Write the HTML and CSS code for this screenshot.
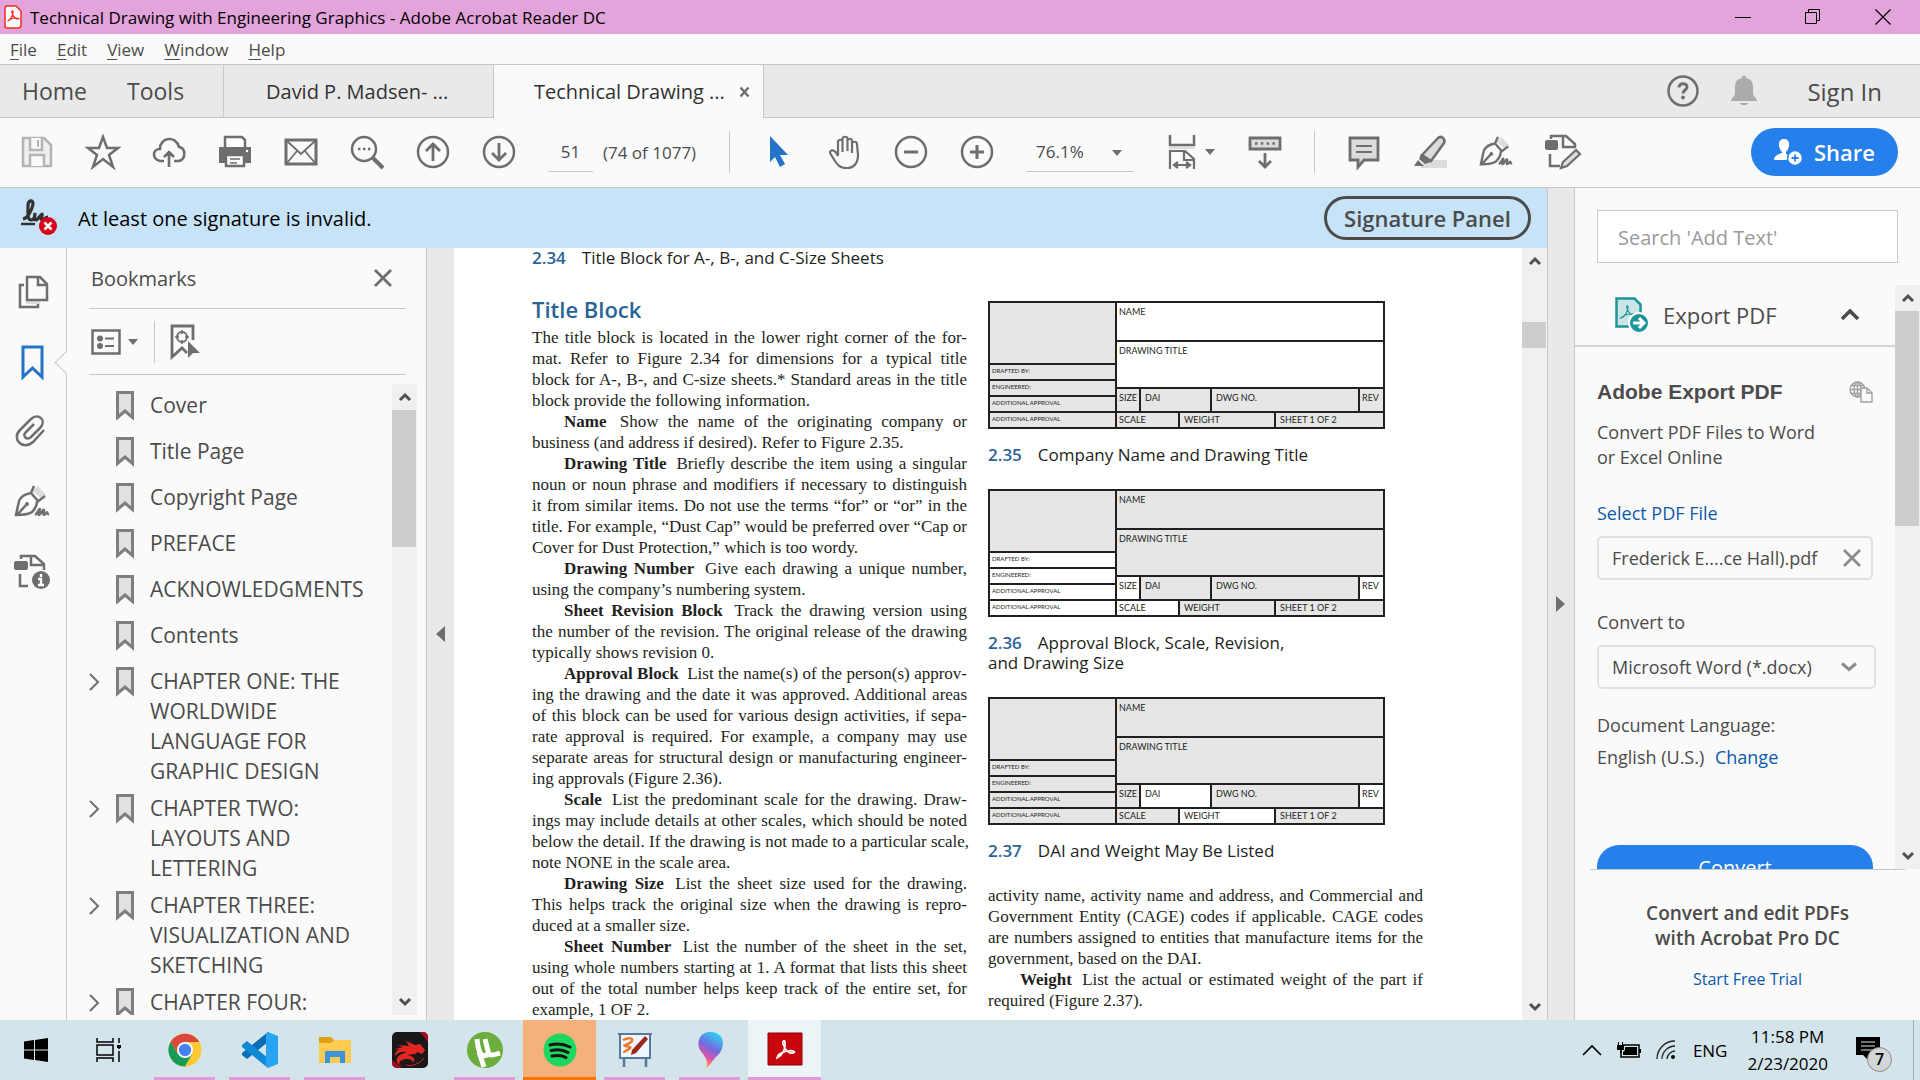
FILE: index.html
```html
<!DOCTYPE html>
<html lang="en">
    <head>
        <meta charset="UTF-8" />
        <meta name="viewport" content="width=device-width, initial-scale=1.0" />
        <title>Technical Drawing with Engineering Graphics - Adobe Acrobat Reader DC</title>
        <link rel="stylesheet" href="styles.css">
    </head>
    <body>
        <!-- shared icons -->
        <svg class="defs" aria-hidden="true">
            <symbol id="i-up" viewBox="0 0 14 10"><path d="M2 8l5-5 5 5" fill="none" stroke="#505050" stroke-width="3"/></symbol>
            <symbol id="i-down" viewBox="0 0 14 10"><path d="M2 2l5 5 5-5" fill="none" stroke="#505050" stroke-width="3"/></symbol>
            <symbol id="i-right" viewBox="0 0 12 20"><path d="M1 2l8 8-8 8" fill="none" stroke="#6e6e6e" stroke-width="2"/></symbol>
            <symbol id="i-caret" viewBox="0 0 12 8"><path d="M1 1h10L6 7z" fill="#6e6e6e"/></symbol>
            <symbol id="i-mark" viewBox="0 0 18 30"><path d="M1.500 1.500h15v25L9 20l-7.500 6.500z" fill="#e1e1e1" stroke="#7e7e7e" stroke-width="3"/></symbol>
            <symbol id="i-pen" viewBox="0 0 36 36">
                <path d="M18 7l6-5 8 9-5 3z" fill="#dcdcdc"/>
                <path d="M20 2l-3 7c-6 1-10 3-12 8L2 31c6 0 13-1 16-3 3-3 5-7 5-10l8-6M17 9l7 8M3 31l9-10" fill="none" stroke="#6e6e6e" stroke-width="2.500"/>
                <circle cx="13" cy="20" r="2" fill="#6e6e6e"/>
                <path d="M21 31c2-1 4-7 5-6s-3 6-1 6 4-7 5-5-2 5 0 5 2-3 3-3 0 3 2 2" fill="none" stroke="#6e6e6e" stroke-width="2.200"/>
            </symbol>
        </svg>

        <header class="titlebar">
            <svg class="app-icon" viewBox="0 0 18 24"><path d="M3 1h9l5 5v14a3 3 0 0 1-3 3H3a2 2 0 0 1-2-2V3a2 2 0 0 1 2-2z" fill="#fff" stroke="#f22b1f" stroke-width="1.500"/><path d="M4 16c2-1 5-5 5-9 0-2-2-1-1 1 1 4 4 6 6 6s1-1-2-1c-4 0-8 2-8 3z" fill="none" stroke="#f22b1f" stroke-width="1.200"/></svg>
            <h1>Technical Drawing with Engineering Graphics - Adobe Acrobat Reader DC</h1>
            <div class="win-btns">
                <button aria-label="Minimize"><svg viewBox="0 0 16 16"><path d="M0 8.500h16" stroke="#000"/></svg></button>
                <button aria-label="Restore"><svg viewBox="0 0 16 16"><path d="M.5 3.500h11v11H.5zM3.500 3.500v-3h11v11h-3" fill="none" stroke="#000"/></svg></button>
                <button aria-label="Close"><svg viewBox="0 0 16 16"><path d="M.5.5l15 15M15.500.5l-15 15" stroke="#000" stroke-width="1.200"/></svg></button>
            </div>
        </header>

        <nav class="menubar">
            <a href="#"><u>F</u>ile</a>
            <a href="#"><u>E</u>dit</a>
            <a href="#"><u>V</u>iew</a>
            <a href="#"><u>W</u>indow</a>
            <a href="#"><u>H</u>elp</a>
        </nav>

        <div class="tabs">
            <div class="home-tabs">
                <button>Home</button>
                <button>Tools</button>
            </div>
            <button class="tab">David P. Madsen- ...</button>
            <button class="tab active">Technical Drawing ... <svg viewBox="0 0 12 12"><path d="M1.500 1.500l8 9M9.500 1.500l-8 9" stroke="#6e6e6e" stroke-width="2.400"/></svg></button>
            <div class="account">
                <svg class="help" viewBox="0 0 32 32"><circle cx="16" cy="16" r="14.500" fill="none" stroke="#6e6e6e" stroke-width="2.500"/><path d="M12 12.500c0-5 8-5 8-.5 0 3-4 3-4 6.500" fill="none" stroke="#6e6e6e" stroke-width="3"/><circle cx="16" cy="22.500" r="1.900" fill="#6e6e6e"/></svg>
                <svg class="bell" viewBox="0 0 26 30"><path d="M11 0h4v2c5 1 7 4 7 9v7c0 2 4 4 4 7H0c0-3 4-5 4-7v-7c0-5 2-8 7-9zM9 27h8c-1 3-7 3-8 0z" fill="#ababab"/></svg>
                <a href="#">Sign In</a>
            </div>
        </div>

        <div class="toolbar">
            <div class="tools">
                <button aria-label="Save"><svg viewBox="0 0 34 34"><path d="M3 3h21l7 7v21H3z" fill="#efefef" stroke="#b4b4b4" stroke-width="2.500"/><path d="M10 3v12h12V3M10 31V20h14v11" fill="#fafafa" stroke="#b4b4b4" stroke-width="2.500"/><path d="M18 5v7" stroke="#b4b4b4" stroke-width="2"/></svg></button>
                <button aria-label="Star"><svg viewBox="0 0 34 34"><path d="M17 2l4 11h11l-9 7 4 12-10-8-10 8 4-12-9-7h11z" fill="none" stroke="#6e6e6e" stroke-width="2.500"/></svg></button>
                <button aria-label="Upload"><svg viewBox="0 0 34 34"><path d="M12 26H8c-8-2-8-12 0-12 0-12 16-14 19-2 7 1 7 12 0 14h-5M17 32V18M12 22l5-5 5 5" fill="none" stroke="#6e6e6e" stroke-width="2.600"/></svg></button>
                <button aria-label="Print"><svg viewBox="0 0 34 34"><path d="M7 12V2h17l3 3v7" fill="#fff" stroke="#6e6e6e" stroke-width="2.500"/><path d="M1 12h32v16H1z" fill="#6e6e6e"/><path d="M8 20h18v11H8z" fill="#fff" stroke="#6e6e6e" stroke-width="2.500"/><path d="M12 24h10M12 28h7" stroke="#6e6e6e" stroke-width="1.600"/><circle cx="29" cy="16" r="1.200" fill="#fff"/></svg></button>
                <button aria-label="Email"><svg viewBox="0 0 34 34"><path d="M2 5h30v24H2z" fill="none" stroke="#6e6e6e" stroke-width="3"/><path d="M3 6l14 13L31 6M3 28l10-12M31 28L21 16" fill="none" stroke="#6e6e6e" stroke-width="1.800"/></svg></button>
                <button aria-label="Find"><svg viewBox="0 0 34 34"><circle cx="14" cy="14" r="12" fill="none" stroke="#6e6e6e" stroke-width="2.500"/><path d="M22 22l11 11" stroke="#6e6e6e" stroke-width="4"/><path d="M8 14h2.400M13 14h2.400M18 14h2.400" stroke="#6e6e6e" stroke-width="2.400"/></svg></button>
                <button aria-label="Previous page"><svg viewBox="0 0 34 34"><circle cx="17" cy="17" r="15" fill="none" stroke="#6e6e6e" stroke-width="2.500"/><path d="M17 26V9M10 16l7-7 7 7" fill="none" stroke="#6e6e6e" stroke-width="2.800"/></svg></button>
                <button aria-label="Next page"><svg viewBox="0 0 34 34"><circle cx="17" cy="17" r="15" fill="none" stroke="#6e6e6e" stroke-width="2.500"/><path d="M17 8v17M10 18l7 7 7-7" fill="none" stroke="#6e6e6e" stroke-width="2.800"/></svg></button>
            </div>
            <div class="page-nav">
                <input type="text" value="51" aria-label="Page number">
                <span>(74 of 1077)</span>
            </div>
            <i class="sep"></i>
            <div class="tools">
                <button aria-label="Select"><svg viewBox="0 0 34 34"><path d="M8 1l18 19h-8l5 9-5 3-5-10-5 5z" fill="#2373c8"/></svg></button>
                <button aria-label="Hand"><svg viewBox="0 0 34 34"><path d="M10 20V7c0-3 4.500-3 4.500 0v10M14.500 15V4c0-3 5-3 5 0v12M19.500 6c0-3 4.500-3 4.500 0v12M24 9c0-3 5-3 5 0l1 11c0 8-4 13-11 13-9 0-10-4-17-15 0-4 5-4 8 3" fill="none" stroke="#6e6e6e" stroke-width="2.200"/></svg></button>
                <button aria-label="Zoom out"><svg viewBox="0 0 34 34"><circle cx="17" cy="17" r="15" fill="none" stroke="#6e6e6e" stroke-width="2.500"/><path d="M10 17h14" stroke="#6e6e6e" stroke-width="3"/></svg></button>
                <button aria-label="Zoom in"><svg viewBox="0 0 34 34"><circle cx="17" cy="17" r="15" fill="none" stroke="#6e6e6e" stroke-width="2.500"/><path d="M10 17h14M17 10v14" stroke="#6e6e6e" stroke-width="3"/></svg></button>
            </div>
            <div class="zoom">
                <select aria-label="Zoom"><option>76.1%</option></select>
                <svg class="caret"><use href="#i-caret"/></svg>
            </div>
            <button class="fit" aria-label="Fit width"><svg class="ico" viewBox="0 0 34 34"><path d="M4 0v10h24V0" fill="none" stroke="#6e6e6e" stroke-width="2.500"/><path d="M3 12h26v2H3z" fill="#dcdcdc"/><path d="M4 34V16h15l9 8v10M18 16v9h10M8 30h16M12 27l-4 3 4 3M20 27l4 3-4 3" fill="none" stroke="#6e6e6e" stroke-width="2.200"/></svg><svg class="caret"><use href="#i-caret"/></svg></button>
            <div class="tools">
                <button aria-label="Page display"><svg viewBox="0 0 34 34"><path d="M2 3h30v11H2z" fill="#dcdcdc" stroke="#6e6e6e" stroke-width="2.800"/><path d="M7 8.500h20" stroke="#6e6e6e" stroke-width="2.500" stroke-dasharray="2.500 3.300"/><path d="M17 18v14M11 26l6 6 6-6" fill="none" stroke="#6e6e6e" stroke-width="2.800"/></svg></button>
            </div>
            <i class="sep"></i>
            <div class="tools">
                <button aria-label="Comment"><svg viewBox="0 0 34 34"><path d="M3 3h28v22H17l-6 7v-7H3z" fill="#dcdcdc" stroke="#6e6e6e" stroke-width="2.800"/><path d="M9 11h16M9 17h16" stroke="#6e6e6e" stroke-width="2"/></svg></button>
                <button aria-label="Highlight"><svg viewBox="0 0 34 34"><path d="M12 25h22v8H7z" fill="#dcdcdc"/><path d="M9 20L25 3c3-3 8 1 6 5L18 26z" fill="#dcdcdc" stroke="#6e6e6e" stroke-width="2.500"/><path d="M8 19l10 8-6 2-6-5zM5 25l6 6H1z" fill="#6e6e6e"/></svg></button>
                <button aria-label="Sign"><svg viewBox="0 0 36 36"><use href="#i-pen"/></svg></button>
                <button aria-label="Edit PDF"><svg viewBox="0 0 34 34"><path d="M6 4V1h15l9 8v4M18 1v11h12M5 19v12h10" fill="none" stroke="#6e6e6e" stroke-width="2.500"/><rect x="0" y="5" width="13" height="10" rx="2" fill="#6e6e6e"/><path d="M16 33l2-6 13-12 4 4-13 12z" fill="#dcdcdc" stroke="#6e6e6e" stroke-width="2.200"/></svg></button>
            </div>
            <button class="share"><svg viewBox="0 0 28 28"><path d="M10 1c7 0 6 9 2 13v2c5 1 6 3 6 6H0c0-3 2-5 8-7v-1C4 10 3 1 10 1z" fill="#fff"/><circle cx="21" cy="20" r="7.500" fill="#fff" stroke="#2680eb" stroke-width="1.500"/><path d="M17.500 20h7M21 16.500v7" stroke="#2680eb" stroke-width="1.800"/></svg>Share</button>
        </div>

        <div class="workspace">
            <div class="viewer">
                <div class="sigbar">
                    <svg viewBox="0 0 38 38"><path d="M3 20c5-1 9-9 10-15 0-5-5-4-5 2 0 5-1 14 3 14s4-7 4-7-1 7 1 7 5-6 6-6-2 6 0 6 3-3 6-3" fill="none" stroke="#323232" stroke-width="3.200"/><path d="M1 25h14" stroke="#323232" stroke-width="2.500"/><circle cx="28" cy="27" r="9" fill="#d7001c"/><path d="M24.500 23.500l7 7M31.500 23.500l-7 7" stroke="#fff" stroke-width="2.600"/></svg>
                    <span>At least one signature is invalid.</span>
                    <button>Signature Panel</button>
                </div>
                <div class="panes">
                    <nav class="rail">
                        <button aria-label="Page thumbnails"><svg viewBox="0 0 36 36"><path d="M10 11H6v22h18v-6" fill="none" stroke="#6e6e6e" stroke-width="2.500"/><path d="M12 27h13v3H12z" fill="#dcdcdc"/><path d="M13 3h13l7 7v16H13zM24 3v8h9" fill="none" stroke="#6e6e6e" stroke-width="2.500"/></svg></button>
                        <button class="current" aria-label="Bookmarks"><svg viewBox="0 0 36 36"><path d="M9 3h19v30l-9.500-9L9 33z" fill="none" stroke="#2373c8" stroke-width="3"/></svg></button>
                        <button aria-label="Attachments"><svg viewBox="0 0 36 36"><path d="M30 16L19 28C9 37-3 25 6 16L17 5c8-7 16 2 9 9L17 23c-4 4-9-1-5-5l8-8" fill="none" stroke="#6e6e6e" stroke-width="2.500"/></svg></button>
                        <button aria-label="Signatures"><svg viewBox="0 0 36 36"><use href="#i-pen"/></svg></button>
                        <button aria-label="Document info"><svg viewBox="0 0 36 36"><path d="M7 5V2h14l9 8v6M17 2v9h13M6 20v12h8" fill="none" stroke="#6e6e6e" stroke-width="2.500"/><rect x="0" y="7" width="14" height="9" rx="2" fill="#6e6e6e"/><circle cx="27" cy="26" r="9" fill="#6e6e6e"/><path d="M27 20v3M24 25h3v6M24 31h6" fill="none" stroke="#fff" stroke-width="2.400"/></svg></button>
                    </nav>

                    <aside class="bookmarks">
                        <div class="bm-head">
                            <h2>Bookmarks</h2>
                            <button aria-label="Close panel"><svg viewBox="0 0 18 18"><path d="M1 1l16 16M17 1L1 17" stroke="#6e6e6e" stroke-width="2.800"/></svg></button>
                        </div>
                        <div class="bm-tools">
                            <button aria-label="Options"><svg class="opt" viewBox="0 0 30 26"><path d="M1.500 1.500h27v23h-27z" fill="none" stroke="#6e6e6e" stroke-width="2.500"/><circle cx="9" cy="9.500" r="3" fill="#6e6e6e"/><circle cx="9" cy="17" r="3" fill="#6e6e6e"/><path d="M14 9.500h9M14 17h9" stroke="#6e6e6e" stroke-width="2.200"/></svg><svg class="caret"><use href="#i-caret"/></svg></button>
                            <i class="sep"></i>
                            <button aria-label="Find current bookmark"><svg class="find" viewBox="0 0 30 36"><path d="M23 16V2H2v31l10-9 5 5" fill="none" stroke="#6e6e6e" stroke-width="2.800"/><circle cx="12" cy="13" r="5" fill="none" stroke="#6e6e6e" stroke-width="2"/><path d="M12 6v4M12 16v4M5 13h4M15 13h4" stroke="#6e6e6e" stroke-width="1.600"/><path d="M18 17l12 12h-7l-5 5z" fill="#6e6e6e"/></svg></button>
                        </div>
                        <div class="bm-body">
                            <ul class="bm-list">
                                <li><i></i><svg class="mark"><use href="#i-mark"/></svg><span>Cover</span></li>
                                <li><i></i><svg class="mark"><use href="#i-mark"/></svg><span>Title Page</span></li>
                                <li><i></i><svg class="mark"><use href="#i-mark"/></svg><span>Copyright Page</span></li>
                                <li><i></i><svg class="mark"><use href="#i-mark"/></svg><span>PREFACE</span></li>
                                <li><i></i><svg class="mark"><use href="#i-mark"/></svg><span>ACKNOWLEDGMENTS</span></li>
                                <li><i></i><svg class="mark"><use href="#i-mark"/></svg><span>Contents</span></li>
                                <li><svg class="exp"><use href="#i-right"/></svg><svg class="mark"><use href="#i-mark"/></svg><span>CHAPTER ONE: THE<br>WORLDWIDE<br>LANGUAGE FOR<br>GRAPHIC DESIGN</span></li>
                                <li><svg class="exp"><use href="#i-right"/></svg><svg class="mark"><use href="#i-mark"/></svg><span>CHAPTER TWO:<br>LAYOUTS AND<br>LETTERING</span></li>
                                <li><svg class="exp"><use href="#i-right"/></svg><svg class="mark"><use href="#i-mark"/></svg><span>CHAPTER THREE:<br>VISUALIZATION AND<br>SKETCHING</span></li>
                                <li><svg class="exp"><use href="#i-right"/></svg><svg class="mark"><use href="#i-mark"/></svg><span>CHAPTER FOUR:</span></li>
                            </ul>
                            <div class="scroll bm-scroll">
                                <svg><use href="#i-up"/></svg>
                                <i class="thumb"></i>
                                <svg class="end"><use href="#i-down"/></svg>
                            </div>
                        </div>
                    </aside>

                    <button class="strip strip-left" aria-label="Collapse left pane"><svg viewBox="0 0 10 16"><path d="M9 0v16L0 8z" fill="#6e6e6e"/></svg></button>

                    <main class="page">
                        <div class="col">
                            <p class="caption"><b>2.34</b>Title Block for A-, B-, and C-Size Sheets</p>
                            <h2>Title Block</h2>
                            <p><span>The title block is located in the lower right corner of the for-</span><span>mat. Refer to Figure 2.34 for dimensions for a typical title</span><span>block for A-, B-, and C-size sheets.* Standard areas in the title</span><span>block provide the following information.</span></p>
                            <p class="run"><span><b>Name</b> Show the name of the originating company or</span><span>business (and address if desired). Refer to Figure 2.35.</span></p>
                            <p class="run"><span><b>Drawing Title</b> Briefly describe the item using a singular</span><span>noun or noun phrase and modifiers if necessary to distinguish</span><span>it from similar items. Do not use the terms “for” or “or” in the</span><span>title. For example, “Dust Cap” would be preferred over “Cap or</span><span>Cover for Dust Protection,” which is too wordy.</span></p>
                            <p class="run"><span><b>Drawing Number</b> Give each drawing a unique number,</span><span>using the company’s numbering system.</span></p>
                            <p class="run"><span><b>Sheet Revision Block</b> Track the drawing version using</span><span>the number of the revision. The original release of the drawing</span><span>typically shows revision 0.</span></p>
                            <p class="run"><span><b>Approval Block</b> List the name(s) of the person(s) approv-</span><span>ing the drawing and the date it was approved. Additional areas</span><span>of this block can be used for various design activities, if sepa-</span><span>rate approval is required. For example, a company may use</span><span>separate areas for structural design or manufacturing engineer-</span><span>ing approvals (Figure 2.36).</span></p>
                            <p class="run"><span><b>Scale</b> List the predominant scale for the drawing. Draw-</span><span>ings may include details at other scales, which should be noted</span><span>below the detail. If the drawing is not made to a particular scale,</span><span>note NONE in the scale area.</span></p>
                            <p class="run"><span><b>Drawing Size</b> List the sheet size used for the drawing.</span><span>This helps track the original size when the drawing is repro-</span><span>duced at a smaller size.</span></p>
                            <p class="run"><span><b>Sheet Number</b> List the number of the sheet in the set,</span><span>using whole numbers starting at 1. A format that lists this sheet</span><span>out of the total number helps keep track of the entire set, for</span><span>example, 1 OF 2.</span></p>
                        </div>
                        <div class="col figures">
                            <figure>
                                <div class="block">
                                    <div class="left">
                                        <div class="blank"></div>
                                        <div>DRAFTED BY:</div>
                                        <div>ENGINEERED:</div>
                                        <div>ADDITIONAL APPROVAL</div>
                                        <div>ADDITIONAL APPROVAL</div>
                                    </div>
                                    <div class="right">
                                        <div class="name on">NAME</div>
                                        <div class="dtitle on">DRAWING TITLE</div>
                                        <div class="row ids"><div>SIZE</div><div>DAI</div><div>DWG NO.</div><div>REV</div></div>
                                        <div class="row foot"><div>SCALE</div><div>WEIGHT</div><div>SHEET 1 OF 2</div></div>
                                    </div>
                                </div>
                                <figcaption class="caption"><b>2.35</b>Company Name and Drawing Title</figcaption>
                            </figure>
                            <figure>
                                <div class="block">
                                    <div class="left">
                                        <div class="blank"></div>
                                        <div class="on">DRAFTED BY:</div>
                                        <div class="on">ENGINEERED:</div>
                                        <div class="on">ADDITIONAL APPROVAL</div>
                                        <div class="on">ADDITIONAL APPROVAL</div>
                                    </div>
                                    <div class="right">
                                        <div class="name">NAME</div>
                                        <div class="dtitle">DRAWING TITLE</div>
                                        <div class="row ids"><div class="on">SIZE</div><div>DAI</div><div>DWG NO.</div><div class="on">REV</div></div>
                                        <div class="row foot"><div class="on">SCALE</div><div>WEIGHT</div><div>SHEET 1 OF 2</div></div>
                                    </div>
                                </div>
                                <figcaption class="caption"><b>2.36</b>Approval Block, Scale, Revision,<br>and Drawing Size</figcaption>
                            </figure>
                            <figure>
                                <div class="block">
                                    <div class="left">
                                        <div class="blank"></div>
                                        <div>DRAFTED BY:</div>
                                        <div>ENGINEERED:</div>
                                        <div>ADDITIONAL APPROVAL</div>
                                        <div>ADDITIONAL APPROVAL</div>
                                    </div>
                                    <div class="right">
                                        <div class="name">NAME</div>
                                        <div class="dtitle">DRAWING TITLE</div>
                                        <div class="row ids"><div>SIZE</div><div class="on">DAI</div><div>DWG NO.</div><div class="on">REV</div></div>
                                        <div class="row foot"><div>SCALE</div><div class="on">WEIGHT</div><div>SHEET 1 OF 2</div></div>
                                    </div>
                                </div>
                                <figcaption class="caption"><b>2.37</b>DAI and Weight May Be Listed</figcaption>
                            </figure>
                            <p><span>activity name, activity name and address, and Commercial and</span><span>Government Entity (CAGE) codes if applicable. CAGE codes</span><span>are numbers assigned to entities that manufacture items for the</span><span>government, based on the DAI.</span></p>
                            <p class="run"><span><b>Weight</b> List the actual or estimated weight of the part if</span><span>required (Figure 2.37).</span></p>
                        </div>
                    </main>
                    <div class="scroll page-scroll">
                        <svg><use href="#i-up"/></svg>
                        <i class="thumb"></i>
                        <svg class="end"><use href="#i-down"/></svg>
                    </div>
                </div>
            </div>

            <button class="strip strip-right" aria-label="Collapse right pane"><svg viewBox="0 0 10 16"><path d="M0 0v16l9-8z" fill="#6e6e6e"/></svg></button>

            <aside class="toolpane">
                <input class="search" type="text" placeholder="Search 'Add Text'" aria-label="Search tools">
                <div class="tp-body">
                    <div class="tp-main">
                        <div class="tp-head">
                            <svg class="exp-icon" viewBox="0 0 34 36"><path d="M1.500 1.500h18l6 6v22h-24z" fill="#cbe5e7" stroke="#1c959c" stroke-width="2.500"/><path d="M6 21c4-1 7-7 7-11 0-2-2-1-1 1 1 5 5 8 8 7s-1-2-4-1c-5 0-9 3-10 4z" fill="none" stroke="#1c959c" stroke-width="1.200"/><circle cx="24" cy="26" r="10" fill="#1c959c" stroke="#fafafa" stroke-width="2"/><path d="M18 26h10M24 21l5 5-5 5" fill="none" stroke="#fff" stroke-width="3"/></svg>
                            <h3>Export PDF</h3>
                            <svg class="chev" viewBox="0 0 18 12"><path d="M1 10l8-8 8 8" fill="none" stroke="#4b4b4b" stroke-width="3.500"/></svg>
                        </div>
                        <div class="tp-form">
                            <div class="tp-title">
                                <h4>Adobe Export PDF</h4>
                                <svg viewBox="0 0 24 22"><g fill="none" stroke="#a0a0a0" stroke-width="1.400"><circle cx="8.500" cy="8.500" r="7.500"/><ellipse cx="8.500" cy="8.500" rx="3.500" ry="7.500"/><path d="M1 8.500h15M2 4.500h13M2 12.500h13M8.500 1v15"/><path d="M12 7h6l5 5v9H12z" fill="#fafafa"/><path d="M18 7v5h5"/></g></svg>
                            </div>
                            <p>Convert PDF Files to Word<br>or Excel Online</p>
                            <a class="select-file" href="#">Select PDF File</a>
                            <div class="file">
                                <span>Frederick E....ce Hall).pdf</span>
                                <button aria-label="Remove file"><svg viewBox="0 0 18 18"><path d="M1 1l16 16M17 1L1 17" stroke="#8c8c8c" stroke-width="2.800"/></svg></button>
                            </div>
                            <label for="format">Convert to</label>
                            <div class="format">
                                <select id="format"><option>Microsoft Word (*.docx)</option></select>
                                <svg viewBox="0 0 16 10"><path d="M1 1.500l7 6 7-6" fill="none" stroke="#8c8c8c" stroke-width="3"/></svg>
                            </div>
                            <p class="lang">Document Language:<br>English (U.S.) <a href="#">Change</a></p>
                            <button class="convert">Convert</button>
                        </div>
                    </div>
                    <div class="scroll tp-scroll">
                        <svg><use href="#i-up"/></svg>
                        <i class="thumb"></i>
                        <svg class="end"><use href="#i-down"/></svg>
                    </div>
                </div>
                <div class="promo">
                    <p>Convert and edit PDFs<br>with Acrobat Pro DC</p>
                    <a href="#">Start Free Trial</a>
                </div>
            </aside>
        </div>

        <footer class="taskbar">
            <button aria-label="Start"><svg viewBox="0 0 36 36"><path d="M6 9.500l10-1.500v9.500H6zM17 8l13-2v11.500H17zM6 18.500h10V28L6 26.500zM17 18.500h13V30l-13-2z" fill="#000"/></svg></button>
            <button aria-label="Task view"><svg viewBox="0 0 36 36"><path d="M5 6v4h16V6M5 30v-4h16v4M5 13h16v10H5zM27 6v5M27 19v11M27 13v4" fill="none" stroke="#000" stroke-width="1.500"/><path d="M25 13h4v3h-4z"/></svg></button>
            <button class="open" aria-label="Chrome"><svg viewBox="0 0 36 36"><circle cx="18" cy="18" r="16.500" fill="#fcc934"/><path d="M3.700 9.750a16.500 16.500 0 0 0 14.300 24.750L25 22l-7-4-7 4z" fill="#169c56"/><path d="M18 10h14.300c-6-11-22-11-28.600-.25L11 22z" fill="#d9483b"/><circle cx="18" cy="18" r="8" fill="#fff"/><circle cx="18" cy="18" r="6.200" fill="#4683f0"/></svg></button>
            <button class="open" aria-label="Visual Studio Code"><svg viewBox="0 0 36 36"><path d="M26 0v10L5 27l-5-4v-2z" fill="#0b6db4"/><path d="M26 36V26L5 9l-5 4v2z" fill="#118ad6"/><path d="M26 0l10 4v28l-10 4-2-2V2z" fill="#27a4f2"/></svg></button>
            <button class="open" aria-label="File Explorer"><svg viewBox="0 0 36 36"><path d="M2 5h12l3 3h17v23H2z" fill="#fccb50"/><path d="M2 5h12l3 3-3 3H2z" fill="#dfa012"/><path d="M8 19h20v12h-5v-6H13v6H8z" fill="#3a94dc"/></svg></button>
            <button aria-label="Dragon Center"><svg viewBox="0 0 36 36"><rect width="36" height="36" rx="5" fill="#191718"/><path d="M28 0h3a5 5 0 0 1 5 5v5zM0 28v3a5 5 0 0 0 5 5h5z" fill="#a50d20"/><path d="M3 17l8-2-6-2 12 1-3-5 9 4 5-1 5 6-3 4-4-2-3 2-8 1c7 1 9 4 6 8 0-4-7-5-11-3s-4 5 3 6C4 34 2 27 8 23c3-2 6-2 6-3-4-1-8 0-11 4 0-4 3-7 7-6z" fill="#e32620"/><path d="M14 33c7 2 14-2 18-7" stroke="#e32620" fill="none"/></svg></button>
            <button class="open" aria-label="uTorrent"><svg viewBox="0 0 36 36"><circle cx="18" cy="18" r="18" fill="#6cae3d"/><path d="M10 7c1 7 1 11 4 15 3 3 8 2 7-3L18 7M21 19c1 5 3 5 12 2M12 20l5 15" fill="none" stroke="#fff" stroke-width="5"/></svg></button>
            <button class="alert" aria-label="Spotify"><svg viewBox="0 0 36 36"><circle cx="18" cy="18" r="16.500" fill="#1ed760"/><path d="M8 13c7-2 14-1 20 2M9 18.500c6-1.500 12-1 17 2M10 24c5-1 10-1 14 1.500" fill="none" stroke="#191414" stroke-width="3" stroke-linecap="round"/></svg></button>
            <button class="open" aria-label="Whiteboard"><svg viewBox="0 0 36 36"><path d="M3 2h30v24H3z" fill="#eef5fb" stroke="#557a9e" stroke-width="2"/><path d="M1 1h34v2H1z" fill="#557a9e"/><path d="M7 27v8M29 27v8" stroke="#557a9e" stroke-width="2.500"/><path d="M6 8c6-3 12-2 8 2-5 4-8 3-6 4s8 0 4 3-5 2-5 4" fill="none" stroke="#ee7a2d" stroke-width="2.500"/><path d="M28 4l3 3-12 14-5 2 1-5z" fill="#9c251c"/></svg></button>
            <button class="open" aria-label="Paint 3D"><svg viewBox="0 0 36 36"><defs><linearGradient id="drop" x1=".7" y1="0" x2=".3" y2="1"><stop offset="0" stop-color="#28d4f5"/><stop offset=".45" stop-color="#7768df"/><stop offset=".75" stop-color="#e953a5"/><stop offset="1" stop-color="#ffc31f"/></linearGradient></defs><path d="M18 0c17 0 15 18 7 24-4 3-6 9-11 12 3-9-2-12-6-18C4 10 8 0 18 0z" fill="url(#drop)"/></svg></button>
            <button class="open focus" aria-label="Acrobat Reader"><svg viewBox="0 0 36 36"><path d="M1 1h34v32H1z" fill="#c9060d" stroke="#8e0006"/><path d="M10 26c6-3 9-10 8-15 0-4-3-2-2 1 2 6 6 10 10 9s-1-3-5-2c-7 1-11 4-11 7z" fill="none" stroke="#fff" stroke-width="1.700"/></svg></button>
            <div class="tray">
                <svg class="t-up" viewBox="0 0 20 12"><path d="M1 11l9-9 9 9" fill="none" stroke="#000" stroke-width="1.600"/></svg>
                <svg class="t-bat" viewBox="0 0 26 18"><path d="M7 4h16v12H5v-5" fill="none" stroke="#000" stroke-width="1.500"/><path d="M9 6h12v8H7v-3l2-2zM23 8h2v4h-2zM1 4h7v5H6v3H4V9H1zM2 1h1v3H2zM6 1h1v3H6z"/></svg>
                <svg class="t-wifi" viewBox="0 0 20 20"><g fill="none" stroke="#222" stroke-width="1.300"><path d="M1 19C1 9 9 1 19 1M6 19C6 12 12 6 19 6M11 19c0-4 4-8 8-8"/></g><circle cx="17" cy="17" r="2"/></svg>
                <span class="lang-id">ENG</span>
                <time>11:58 PM<br>2/23/2020</time>
                <button class="notes" aria-label="Notifications"><svg viewBox="0 0 26 26"><path d="M0 0h24v18H14l-1 6-6-6H0z"/><path d="M5 5h14M5 9h14M5 13h14" stroke="#d4e5eb" stroke-width="1.200"/></svg><b>7</b></button>
                <i class="peek"></i>
            </div>
        </footer>
    </body>
</html>
```

FILE: styles.css
```css
* {
    box-sizing: border-box;
    margin: 0;
    padding: 0;
}
body {
    display: flex;
    flex-direction: column;
    height: 100vh;
    overflow: hidden;
    background: #fafafa;
    color: #4b4b4b;
    font-family: "Open Sans", "Noto Sans", sans-serif;
    font-size: 17px;
}
button,
input,
select {
    border: 0;
    background: none;
    color: inherit;
    font: inherit;
}
select {
    appearance: none;
}
a {
    color: inherit;
    text-decoration: none;
}
svg {
    display: block;
    flex: none;
    overflow: visible;
}
.defs {
    position: absolute;
    width: 0;
    height: 0;
}
.caret {
    width: 12px;
    height: 8px;
}
.sep {
    width: 1px;
    height: 42px;
    background: #c8c8c8;
}

/* title bar and menu */
.titlebar {
    display: flex;
    align-items: center;
    height: 34px;
    flex: none;
    padding: 0 2px 0 4px;
    gap: 8px;
    background: #e3a3db;
    color: #000;
}
.titlebar h1 {
    flex: 1;
    font-size: 17px;
    font-weight: 400;
}
.app-icon {
    width: 18px;
    height: 24px;
}
.win-btns {
    display: flex;
}
.win-btns button {
    display: grid;
    place-items: center;
    width: 70px;
    height: 34px;
}
.win-btns svg {
    width: 16px;
    height: 16px;
}
.menubar {
    display: flex;
    align-items: center;
    height: 31px;
    flex: none;
    padding: 0 10px;
    gap: 20px;
    border-bottom: 1px solid #c8c8c8;
}
.menubar u {
    text-underline-offset: 3px;
}

/* tabs */
.tabs {
    display: flex;
    height: 53px;
    flex: none;
    background: #e9e9e9;
    border-bottom: 1px solid #c8c8c8;
}
.home-tabs {
    display: flex;
    width: 224px;
    padding-left: 22px;
    gap: 40px;
    border-right: 1px solid #c8c8c8;
    font-size: 23px;
}
.tab {
    display: flex;
    align-items: center;
    width: 270px;
    padding-left: 42px;
    border-right: 1px solid #c8c8c8;
    color: #323232;
    font-size: 20px;
}
.tab.active {
    height: 53px;
    padding-left: 40px;
    gap: 14px;
    background: #fafafa;
}
.tab svg {
    width: 12px;
    height: 12px;
}
.account {
    display: flex;
    align-items: center;
    margin-left: auto;
    padding-right: 38px;
    font-size: 24px;
}
.help {
    width: 32px;
    height: 32px;
}
.bell {
    width: 26px;
    height: 30px;
    margin: 0 50px 0 32px;
}

/* toolbar */
.toolbar {
    display: flex;
    align-items: center;
    height: 70px;
    flex: none;
    padding: 0 22px 1px 20px;
    gap: 32px;
    border-bottom: 1px solid #c8c8c8;
}
.tools {
    display: flex;
    gap: 32px;
}
.tools svg,
.fit .ico {
    width: 34px;
    height: 34px;
}
.page-nav {
    display: flex;
    align-items: center;
    width: 149px;
    gap: 10px;
    white-space: nowrap;
}
.page-nav input {
    width: 45px;
    height: 40px;
    border-bottom: 1px solid #c8c8c8;
    text-align: center;
}
.zoom {
    position: relative;
    width: 108px;
}
.zoom select {
    width: 100%;
    height: 40px;
    padding-left: 10px;
    border-bottom: 1px solid #c8c8c8;
}
.zoom .caret {
    position: absolute;
    right: 11px;
    top: 17px;
}
.fit {
    display: flex;
    align-items: center;
    gap: 4px;
}
.share {
    display: flex;
    align-items: center;
    justify-content: center;
    width: 147px;
    height: 48px;
    margin-left: auto;
    gap: 12px;
    border-radius: 24px;
    background: #2680eb;
    color: #fff;
    font-size: 22px;
    font-weight: 600;
}
.share svg {
    width: 28px;
    height: 28px;
}

/* workspace */
.workspace {
    display: flex;
    flex: 1;
    min-height: 0;
}
.viewer {
    display: flex;
    flex-direction: column;
    flex: 1;
    min-width: 0;
}
.sigbar {
    display: flex;
    align-items: center;
    height: 60px;
    flex: none;
    padding: 0 16px 0 20px;
    gap: 20px;
    background: #c7e3f8;
    color: #000;
    font-size: 20px;
}
.sigbar svg {
    width: 38px;
    height: 38px;
}
.sigbar button {
    width: 207px;
    height: 44px;
    margin-left: auto;
    border: 3px solid #4b4b4b;
    border-radius: 22px;
    color: #4b4b4b;
    font-size: 22px;
    font-weight: 600;
    line-height: 36px;
}
.panes {
    display: flex;
    flex: 1;
    min-height: 0;
}
.rail {
    display: flex;
    flex-direction: column;
    width: 67px;
    padding: 26px 0 0 14px;
    gap: 34px;
    border-right: 1px solid #c8c8c8;
}
.rail button {
    position: relative;
    height: 36px;
}
.rail svg {
    width: 36px;
    height: 36px;
}
.current::after {
    content: "";
    position: absolute;
    right: -9px;
    top: 10px;
    width: 16px;
    height: 16px;
    border: solid #c8c8c8;
    border-width: 0 0 1px 1px;
    background: #fafafa;
    transform: rotate(45deg);
}

/* bookmarks */
.bookmarks {
    display: flex;
    flex-direction: column;
    width: 360px;
    padding: 0 9px 5px 22px;
    border-right: 1px solid #c8c8c8;
}
.bm-head,
.bm-tools {
    display: flex;
    align-items: center;
    margin-right: 11px;
    border-bottom: 1px solid #c8c8c8;
}
.bm-head {
    justify-content: space-between;
    height: 61px;
    padding: 0 14px 0 2px;
}
.bm-head h2 {
    font-size: 20px;
    font-weight: 400;
}
.bm-head svg {
    width: 18px;
    height: 18px;
}
.bm-tools {
    height: 66px;
    padding-left: 2px;
    gap: 15px;
}
.bm-tools button {
    display: flex;
    align-items: center;
    gap: 6px;
}
.opt {
    width: 30px;
    height: 26px;
}
.find {
    width: 30px;
    height: 36px;
}
.bm-body {
    display: flex;
    flex: 1;
    min-height: 0;
    padding-top: 9px;
}
.bm-list {
    flex: 1;
    overflow: hidden;
    padding-top: 6px;
    list-style: none;
    font-size: 21px;
    line-height: 30px;
    white-space: nowrap;
}
.bm-list li {
    display: grid;
    grid-template-columns: 27px 34px 1fr;
    align-items: start;
    min-height: 46px;
    padding-bottom: 7px;
}
.exp {
    width: 12px;
    height: 20px;
    margin-top: 6px;
}
.mark {
    width: 18px;
    height: 30px;
    margin-top: 1px;
}

/* scroll bars */
.scroll {
    display: flex;
    flex-direction: column;
    align-items: center;
    flex: none;
    width: 25px;
    background: #f0f0f0;
}
.scroll svg {
    width: 14px;
    height: 10px;
    margin: 8px 0;
}
.scroll .end {
    margin-top: auto;
}
.thumb {
    align-self: stretch;
    margin-right: 1px;
    background: #cdcdcd;
}
.bm-scroll .thumb {
    height: 137px;
}
.page-scroll .thumb {
    height: 26px;
    margin-top: 48px;
}
.tp-scroll .thumb {
    height: 215px;
}

.strip {
    display: grid;
    place-items: center;
    flex: none;
    width: 27px;
    background: #e9e9e9;
}
.strip-right {
    width: 28px;
    border: solid #c8c8c8;
    border-width: 0 1px;
}
.strip svg {
    width: 10px;
    height: 16px;
}

/* document page */
.page {
    display: flex;
    flex: 1;
    min-width: 0;
    overflow: hidden;
    padding-left: 78px;
    gap: 21px;
    background: #fff;
    color: #231f20;
    font-family: "Liberation Serif", serif;
    font-size: 17px;
    line-height: 21px;
}
.col {
    flex: none;
    width: 435px;
}
.col h2 {
    margin: 26px 0 3px;
    color: #2a6496;
    font: 600 22px/30px "Open Sans", sans-serif;
}
.col p span {
    display: block;
    text-align-last: justify;
    white-space: nowrap;
}
.col p span:last-child {
    text-align-last: left;
}
.run span:first-child {
    padding-left: 32px;
}
.run b {
    margin-right: 4px;
}
.caption {
    font-family: "Open Sans", sans-serif;
    font-size: 17px;
    line-height: 20px;
}
.caption b {
    margin-right: 16px;
    color: #2a6496;
    font-weight: 600;
}
.figures {
    padding-top: 53px;
}
figure {
    margin-bottom: 24px;
}
figure .caption {
    margin-top: 16px;
}
.figures p:first-of-type {
    margin-top: 24px;
}
.block {
    display: grid;
    grid-template-columns: 127px 1fr;
    width: 397px;
    height: 128px;
    border: 2px solid #231f20;
    background: #231f20;
    font: 9px/18px Lato, sans-serif;
}
.left,
.right,
.row {
    display: grid;
    gap: 2px;
}
.left {
    grid-template-rows: 1fr repeat(4, 14px);
    margin-right: 2px;
    font-size: 6px;
    line-height: 12px;
}
.right {
    grid-template-rows: 37px 1fr 22px 14px;
}
.left div,
.right > div:not(.row),
.row div {
    padding-left: 2px;
    background: #e6e6e6;
    white-space: nowrap;
}
.left .on,
.right .on,
.right > .on:not(.row) {
    background: #fff;
}
.ids {
    grid-template-columns: 22px 69px 1fr 23px;
}
.foot {
    grid-template-columns: 61px 94px 1fr;
    line-height: 14px;
}
.row div:not(:first-child):not(:last-child),
.foot div:last-child {
    padding-left: 4px;
}

/* tools pane */
.toolpane {
    display: flex;
    flex-direction: column;
    width: 345px;
}
.search {
    flex: none;
    width: 301px;
    height: 53px;
    margin: 22px;
    padding: 2px 20px 0;
    border: 1px solid #c8c8c8;
    background: #fff;
    font-size: 20px;
}
.search::placeholder {
    color: #9b9b9b;
}
.tp-body {
    display: flex;
    height: 584px;
}
.tp-main {
    flex: 1;
    overflow: hidden;
}
.tp-head {
    display: flex;
    align-items: center;
    height: 62px;
    padding: 0 36px 0 40px;
    border-bottom: 2px solid #d5d5d5;
}
.exp-icon {
    width: 34px;
    height: 36px;
}
.tp-head h3 {
    flex: 1;
    margin-left: 14px;
    font-size: 22px;
    font-weight: 400;
}
.chev {
    width: 18px;
    height: 12px;
}
.tp-form {
    display: flex;
    flex-direction: column;
    padding: 32px 22px 0;
    font-size: 18px;
    line-height: 25px;
}
.tp-title {
    display: flex;
    align-items: center;
    justify-content: space-between;
    margin-bottom: 16px;
}
.tp-title h4 {
    font: 700 21px/25px "Liberation Sans", sans-serif;
}
.tp-title svg {
    width: 24px;
    height: 22px;
}
.toolpane a {
    color: #0d59ab;
}
.select-file {
    margin: 31px 0 10px;
}
.file,
.format {
    display: flex;
    align-items: center;
    height: 44px;
    border: 2px solid #e1e1e1;
    border-radius: 5px;
}
.file {
    justify-content: space-between;
    padding: 0 10px 0 13px;
    margin-bottom: 30px;
}
.file svg {
    width: 18px;
    height: 18px;
}
.format {
    position: relative;
    margin: 10px -3px 20px 0;
}
.format select {
    width: 100%;
    height: 40px;
    padding-left: 13px;
}
.format svg {
    position: absolute;
    right: 17px;
    top: 15px;
    width: 16px;
    height: 10px;
}
.lang {
    line-height: 32px;
}
.lang a {
    margin-left: 6px;
}
.convert {
    height: 44px;
    flex: none;
    margin-top: 72px;
    border-radius: 24px;
    background: #2680eb;
    color: #fff;
    font-size: 20px;
}
.promo {
    flex: 1;
    margin: 0 15px;
    padding-top: 31px;
    border-top: 1px solid #c8c8c8;
    text-align: center;
    line-height: 25px;
}
.promo p {
    margin-bottom: 15px;
    font-size: 19px;
    font-weight: 600;
}
.promo a {
    font-size: 16px;
}

/* taskbar */
.taskbar {
    display: flex;
    height: 60px;
    flex: none;
    background: #d4e4eb;
    color: #000;
}
.taskbar > button {
    display: grid;
    place-items: center;
    width: 75px;
    border: solid transparent;
    border-width: 3px 0;
}
.taskbar > button:first-child {
    width: 72px;
}
.taskbar > button > svg {
    width: 36px;
    height: 36px;
}
.taskbar > .open {
    background: linear-gradient(#e09bd8, #e09bd8) center bottom / 61px 3px no-repeat border-box;
}
.taskbar > .alert {
    background: linear-gradient(#ff7300, #ff7300) center bottom / 73px 3px no-repeat border-box, linear-gradient(#f5b07c, #f5b07c) center / 73px no-repeat border-box;
}
.taskbar > .focus {
    background: linear-gradient(#e09bd8, #e09bd8) center bottom / 73px 3px no-repeat border-box, linear-gradient(#edf4f7, #edf4f7) center / 73px no-repeat border-box;
}
.tray {
    display: flex;
    align-items: center;
    margin-left: auto;
    padding-right: 6px;
}
.t-up {
    width: 20px;
    height: 12px;
    margin-right: 14px;
}
.t-bat {
    width: 26px;
    height: 18px;
    margin-right: 14px;
}
.t-wifi {
    width: 20px;
    height: 20px;
}
.lang-id {
    margin: 0 20px 0 17px;
}
.tray time {
    line-height: 27px;
    text-align: center;
}
.notes {
    position: relative;
    margin: 0 31px 0 28px;
}
.notes svg {
    width: 26px;
    height: 26px;
}
.notes b {
    position: absolute;
    left: 11px;
    top: 10px;
    width: 25px;
    height: 25px;
    border: 1px solid #8c8c8c;
    border-radius: 50%;
    background: #d2d6d8;
    font-size: 16px;
    font-weight: 600;
    line-height: 23px;
}
.peek {
    width: 1px;
    height: 60px;
    background: #9fb0b8;
}
```
